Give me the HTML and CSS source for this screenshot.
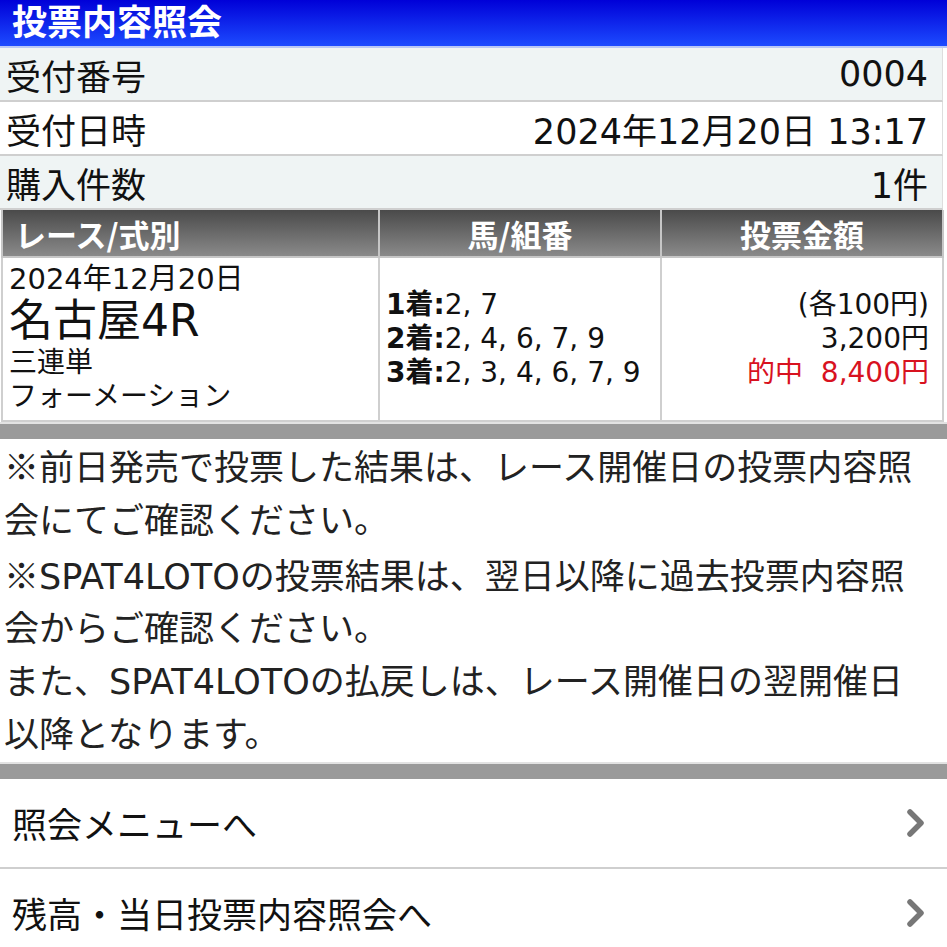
FILE: index.html
```html
<!DOCTYPE html>
<html lang="ja">
<head>
  <meta charset="UTF-8">
  <title>投票内容照会</title>
  <link rel="stylesheet" href="styles.css">
</head>
<body>

<h1 class="page-title">投票内容照会</h1>

<div class="info">
  <div class="info-row">
    <span class="info-label">受付番号</span>
    <span class="info-value">0004</span>
  </div>
  <div class="info-row alt">
    <span class="info-label">受付日時</span>
    <span class="info-value">2024年12月20日 13:17</span>
  </div>
  <div class="info-row">
    <span class="info-label">購入件数</span>
    <span class="info-value">1件</span>
  </div>
</div>

<table class="bet">
  <thead>
    <tr>
      <th class="col-race">レース/式別</th>
      <th class="col-horse">馬/組番</th>
      <th class="col-amount">投票金額</th>
    </tr>
  </thead>
  <tbody>
    <tr>
      <td class="race">
        <div class="race-date">2024年12月20日</div>
        <div class="race-name">名古屋4R</div>
        <div class="race-type">三連単</div>
        <div class="race-type">フォーメーション</div>
      </td>
      <td class="horse">
        <div><b>1着:</b>2, 7</div>
        <div><b>2着:</b>2, 4, 6, 7, 9</div>
        <div><b>3着:</b>2, 3, 4, 6, 7, 9</div>
      </td>
      <td class="amount">
        <div>(各100円)</div>
        <div>3,200円</div>
        <div class="hit">的中&nbsp;&nbsp;8,400円</div>
      </td>
    </tr>
  </tbody>
</table>

<div class="band"></div>

<div class="notes">
  <p><span class="mark">※</span>前日発売で投票した結果は、レース開催日の投票内容照会にてご確認ください。</p>
  <p><span class="mark">※</span>SPAT4LOTOの投票結果は、翌日以降に過去投票内容照会からご確認ください。</p>
  <p>また、SPAT4LOTOの払戻しは、レース開催日の翌開催日以降となります。</p>
</div>

<div class="band"></div>

<ul class="menu">
  <li>
    <a href="#">照会メニューへ
      <svg class="chevron" width="22" height="32" viewBox="0 0 22 32"><path d="M5 5 L16 16 L5 27" fill="none" stroke="#777" stroke-width="5.5" stroke-linejoin="round" stroke-linecap="round"/></svg>
    </a>
  </li>
  <li>
    <a href="#">残高・当日投票内容照会へ
      <svg class="chevron" width="22" height="32" viewBox="0 0 22 32"><path d="M5 5 L16 16 L5 27" fill="none" stroke="#777" stroke-width="5.5" stroke-linejoin="round" stroke-linecap="round"/></svg>
    </a>
  </li>
</ul>

</body>
</html>
```

FILE: styles.css
```css
body {
  margin: 0;
  font-family: 'DejaVu Sans', 'Noto Sans CJK JP', sans-serif;
  color: #111;
  background: #fff;
}

.page-title {
  margin: 0;
  height: 46px;
  padding: 0 12px;
  font-family: 'Noto Sans CJK JP', sans-serif;
  font-size: 35px;
  line-height: 40px;
  font-weight: bold;
  color: #fff;
  background: linear-gradient(#0000d8, #1d4bff);
  border-bottom: 2px solid #b9c8f5;
}

.info-row {
  display: flex;
  justify-content: space-between;
  align-items: center;
  height: 52px;
  padding: 0 14px 0 6px;
  margin-right: 4px;
  font-size: 35px;
  background: #eff4f4;
  border-bottom: 2px solid #cfcfcf;
  border-right: 1px solid #ddd;
}

.info-row.alt {
  background: #fff;
}

.bet {
  width: calc(100% - 4px);
  border-collapse: collapse;
  margin-left: 1px;
}

.bet th {
  height: 46px;
  padding: 0;
  font-family: 'Noto Sans CJK JP', sans-serif;
  font-size: 31px;
  font-weight: bold;
  color: #fff;
  background: linear-gradient(#4a4a4a, #8a8a8a);
  border: 2px solid #c6c6c6;
  border-top: 0;
}

.bet th.col-race {
  width: 363px;
  text-align: left;
  padding-left: 12px;
}

.bet th.col-horse {
  width: 280px;
}

.bet td {
  height: 156px;
  padding: 0;
  border: 2px solid #cfcfcf;
  vertical-align: middle;
}

.race {
  padding: 2px 6px 4px !important;
}

.race-date {
  font-size: 29px;
  line-height: 34px;
}

.race-name {
  font-size: 44px;
  line-height: 50px;
}

.race-type {
  font-size: 28px;
  line-height: 34px;
}

.horse {
  padding-left: 6px !important;
  font-size: 28px;
  line-height: 34px;
}

.amount {
  padding-right: 13px !important;
  text-align: right;
  font-size: 28px;
  line-height: 34px;
}

.hit {
  color: #d8121f;
}

.band {
  height: 15px;
  background: #9a9a9a;
  border-top: 2px solid #e2e2e2;
}

.notes {
  padding: 0 14px 0 4px;
  font-size: 35px;
  line-height: 52.8px;
  color: #222;
}

.notes p {
  margin: 0;
}

.mark {
  font-family: 'Noto Sans CJK JP', sans-serif;
}

.menu {
  list-style: none;
  margin: 0;
  padding: 0;
}

.menu li {
  border-bottom: 2px solid #cfcfcf;
}

.menu li:last-child {
  border-bottom: 0;
}

.menu a {
  display: flex;
  justify-content: space-between;
  align-items: center;
  height: 88px;
  padding: 0 20px 0 12px;
  font-family: 'Noto Sans CJK JP', sans-serif;
  font-size: 35px;
  color: #111;
  text-decoration: none;
}
```
